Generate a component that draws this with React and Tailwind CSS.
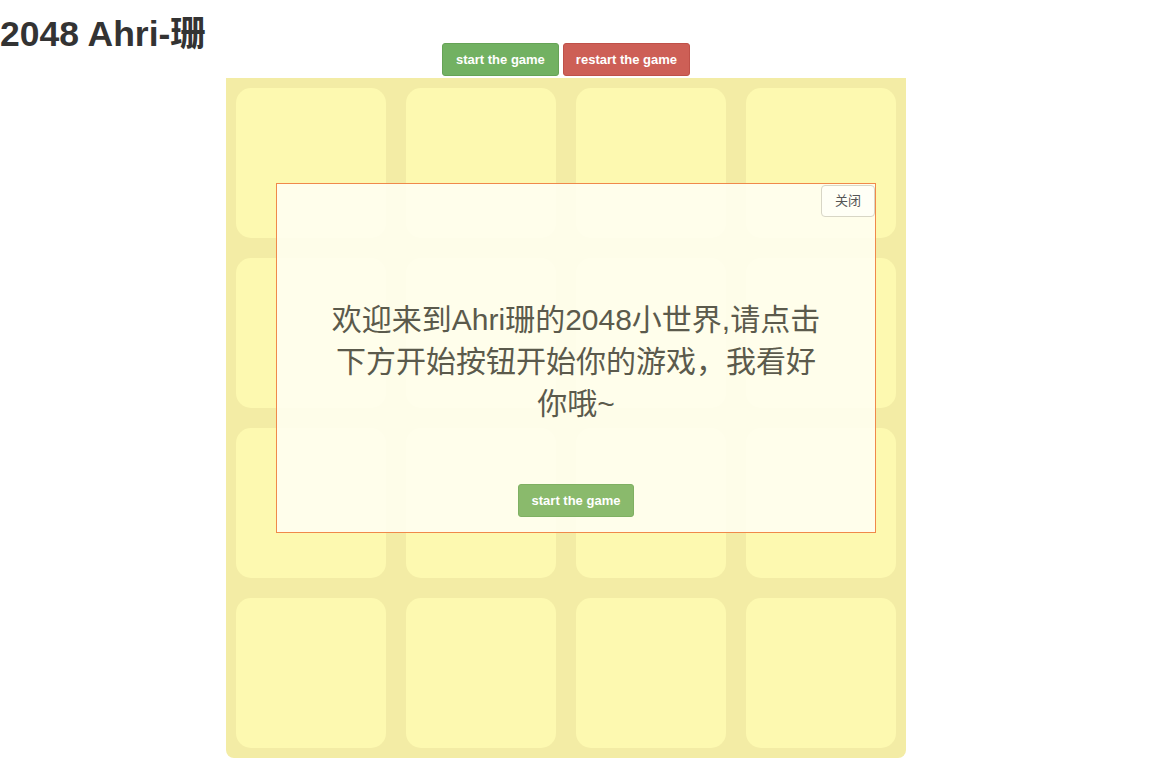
export default function App() {
  const cells = Array.from({ length: 16 }, (_, i) => i);

  return (
    <div className="min-h-screen bg-white font-['Liberation_Sans','Noto_Sans_CJK_SC',sans-serif] text-[#333]">
      <div className="flex">
        {/* Title */}
        <div className="w-[226px] shrink-0">
          <h1 className="mt-[14px] text-[35.5px] font-bold leading-[40px] whitespace-nowrap">2048 Ahri-珊</h1>
        </div>

        {/* Game column */}
        <div className="w-[680px] shrink-0 pt-[43px]">
          <div className="flex justify-center gap-[4px] mb-[2px]">
            <button className="h-[33px] px-[13px] rounded-[3px] bg-[#72b162] border border-[#66a356] text-white text-[13px] font-bold">
              start the game
            </button>
            <button className="h-[33px] px-[12px] rounded-[3px] bg-[#cd5f56] border border-[#bf5149] text-white text-[13px] font-bold">
              restart the game
            </button>
          </div>

          {/* Board */}
          <div className="relative bg-[#f3eca5] rounded-b-[8px] p-[10px]">
            <div className="grid grid-cols-4 gap-[20px]">
              {cells.map(i => (
                <div key={i} className="w-[150px] h-[150px] rounded-[15px] bg-[#fdf9b0]" />
              ))}
            </div>

            {/* Welcome dialog */}
            <div className="absolute left-[50px] top-[105px] w-[600px] h-[350px] border border-[#f0894a] bg-[rgba(255,255,244,0.86)] flex flex-col items-center">
              <button className="self-end mt-[1px] h-[32px] px-[13px] rounded-[4px] border border-[#d8d6c6] bg-[#fffff6] text-[13px] text-[#555]">
                关闭
              </button>
              <p className="mt-[82px] w-[496px] text-center text-[30px] leading-[42px] text-[#5b5a4c]">
                欢迎来到Ahri珊的2048小世界,请点击下方开始按钮开始你的游戏，我看好你哦~
              </p>
              <button className="mt-[59px] h-[33px] px-[13px] rounded-[3px] bg-[#8aba6c] border border-[#7fb062] text-white text-[13px] font-bold">
                start the game
              </button>
            </div>
          </div>
        </div>
      </div>
    </div>
  );
}
